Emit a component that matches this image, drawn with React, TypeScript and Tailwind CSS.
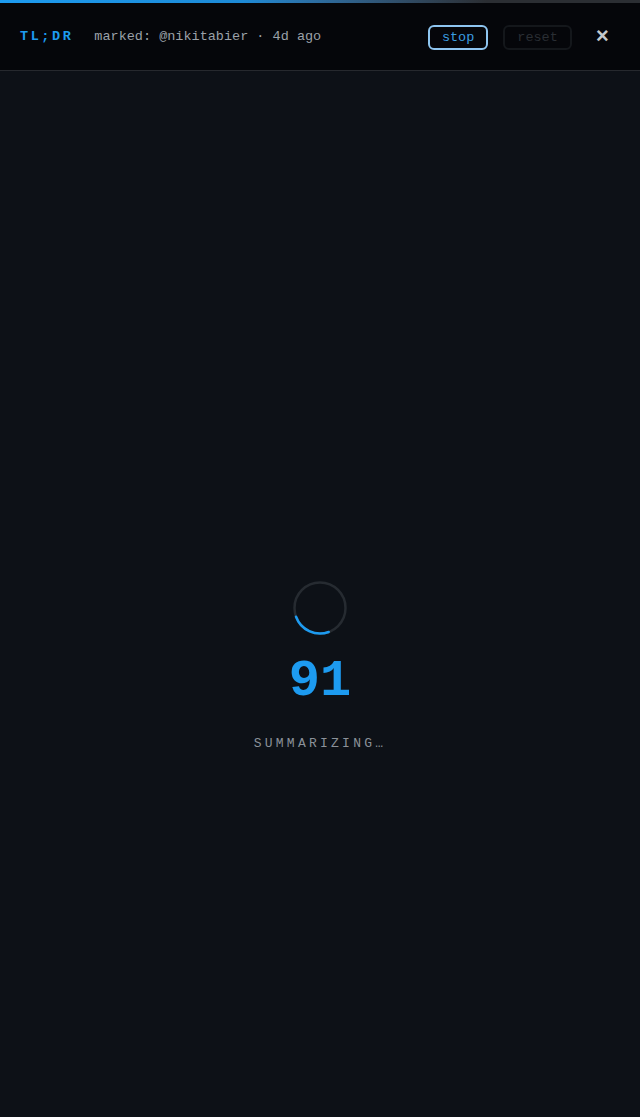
const mono = { fontFamily: '"Liberation Mono", "DejaVu Sans Mono", monospace' }

const Spinner = () => {
    return (
        <svg width="56" height="56" viewBox="0 0 56 56" fill="none">
            <circle cx="28" cy="28" r="25.5" stroke="#262b31" strokeWidth="2.5" />
            <path
                d="M 4.04 36.72 A 25.5 25.5 0 0 0 36.72 51.96"
                stroke="#1d9bf0"
                strokeWidth="2.5"
                strokeLinecap="round"
            />
        </svg>
    )
}

const App = () => {
    return (
        <div className="flex min-h-[1117px] w-full flex-col bg-[#0d1117]" style={mono}>
            <header className="border-b border-[#26292e] bg-[#05060a]">
                <div className="h-[3px] w-full bg-[#2b2e33]">
                    <div className="h-full w-[76%] bg-gradient-to-r from-[#1d9bf0] via-[#1d8ad6] to-[#2b2e33]" />
                </div>

                <div className="flex h-[67px] items-center pl-5 pr-[31px] pt-[2px]">
                    <span className="text-[13.5px] font-bold tracking-[0.19em] text-[#1d9bf0]">
                        TL;DR
                    </span>

                    <span className="ml-[21px] text-[13.5px] text-[#9ba1a8]">
                        marked: @nikitabier · 4d ago
                    </span>

                    <div className="ml-auto flex items-center">
                        <button className="h-[25px] rounded-md border-2 border-[#8ec5f0] px-3 text-[13.5px] leading-none text-[#3b9ee0]">
                            stop
                        </button>

                        <button className="ml-[15px] h-[25px] rounded-md border-2 border-[#14171b] px-3 text-[13.5px] leading-none text-[#2a2e34]">
                            reset
                        </button>

                        <span className="ml-[24px] text-[22px] font-bold leading-none text-[#c3c7cc]">
                            ×
                        </span>
                    </div>
                </div>
            </header>

            <main className="flex flex-1 flex-col items-center pt-[509px]">
                <Spinner />

                <p className="mt-[20px] text-[52px] font-bold leading-none text-[#1d9bf0]">
                    91
                </p>

                <p className="mt-[26px] text-[13px] uppercase tracking-[0.25em] text-[#8b9199]">
                    Summarizing…
                </p>
            </main>
        </div>
    )
}

export default App
